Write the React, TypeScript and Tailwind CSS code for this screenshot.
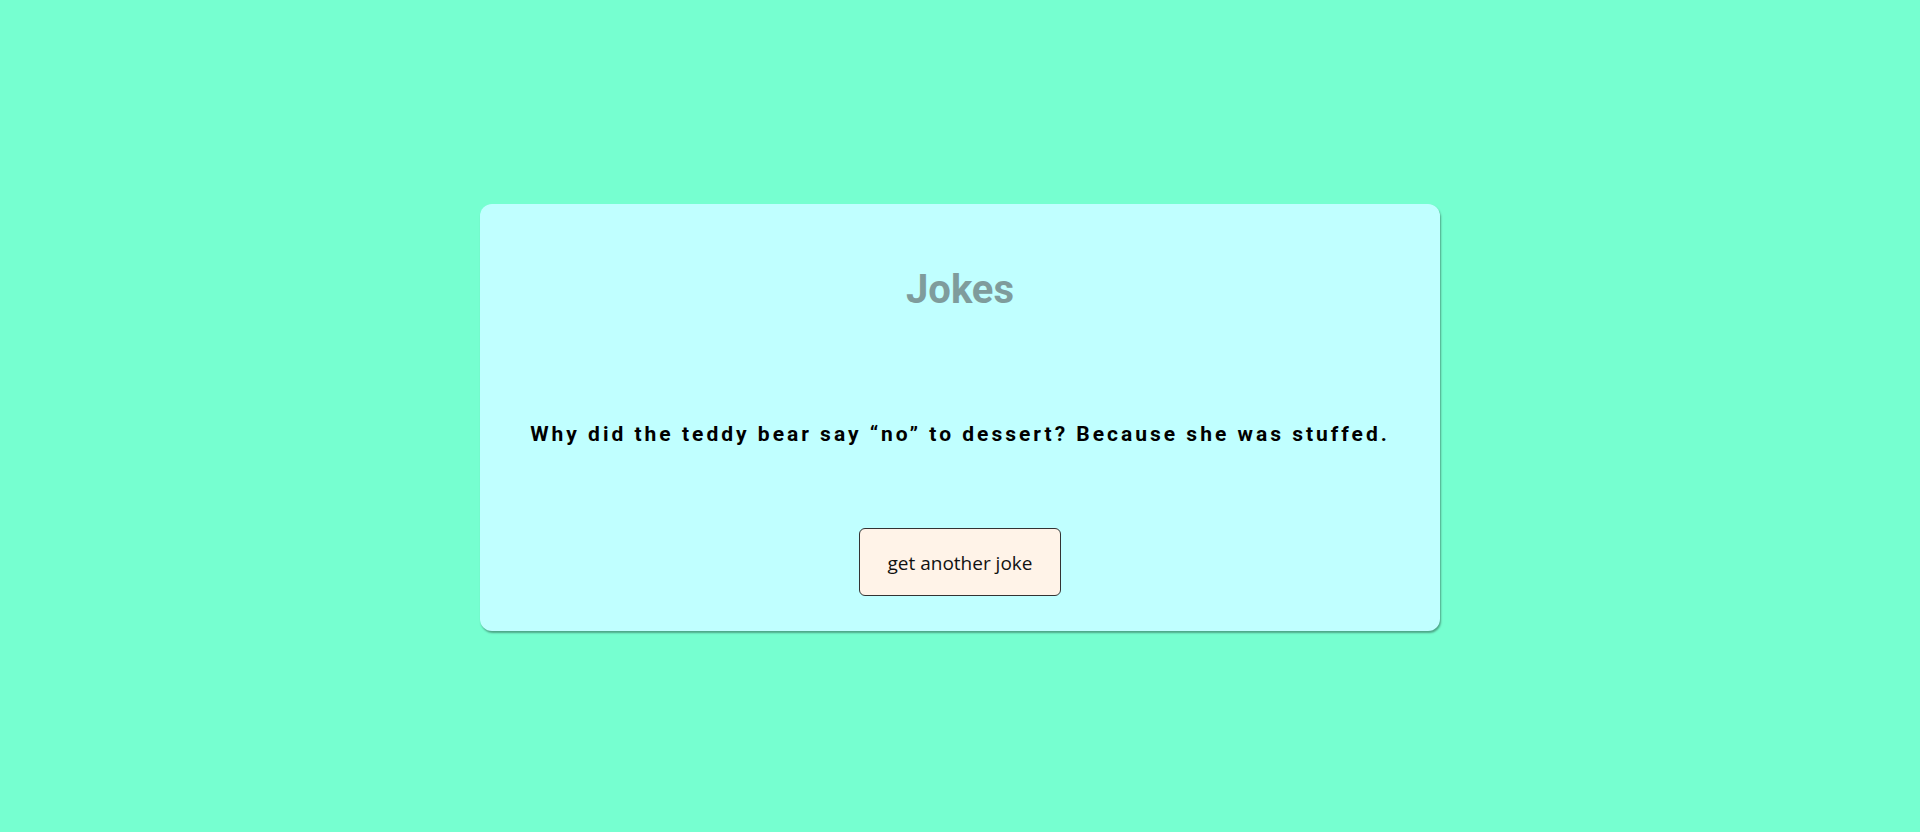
import { useState } from "react";

const jokes = [
    "Why did the teddy bear say “no” to dessert? Because she was stuffed.",
];

export default function App() {
    const [idx, setIdx] = useState(0);

    return (
        <div className="min-h-screen w-full bg-[#76ffd0] flex justify-center pt-[204px]">
            <div className="w-[960px] h-[427px] bg-[#c0ffff] rounded-xl shadow-[1px_2px_2px_rgba(0,0,0,0.35)] flex flex-col items-center">
                <h1 className="mt-[56px] text-[40px] font-bold text-[#7f9c9c] font-['Roboto',sans-serif]">
                    Jokes
                </h1>
                <p className="mt-[99px] text-[21px] font-bold tracking-[3px] text-black font-['Roboto',sans-serif]">
                    {jokes[idx]}
                </p>
                <button
                    onClick={() => setIdx((idx + 1) % jokes.length)}
                    className="mt-[77px] w-[202px] h-[68px] pt-[3px] bg-[#fff3e8] border border-[#333] rounded-md text-[19px] text-[#111] font-['Segoe_UI','Open_Sans',sans-serif]"
                >
                    get another joke
                </button>
            </div>
        </div>
    );
}
